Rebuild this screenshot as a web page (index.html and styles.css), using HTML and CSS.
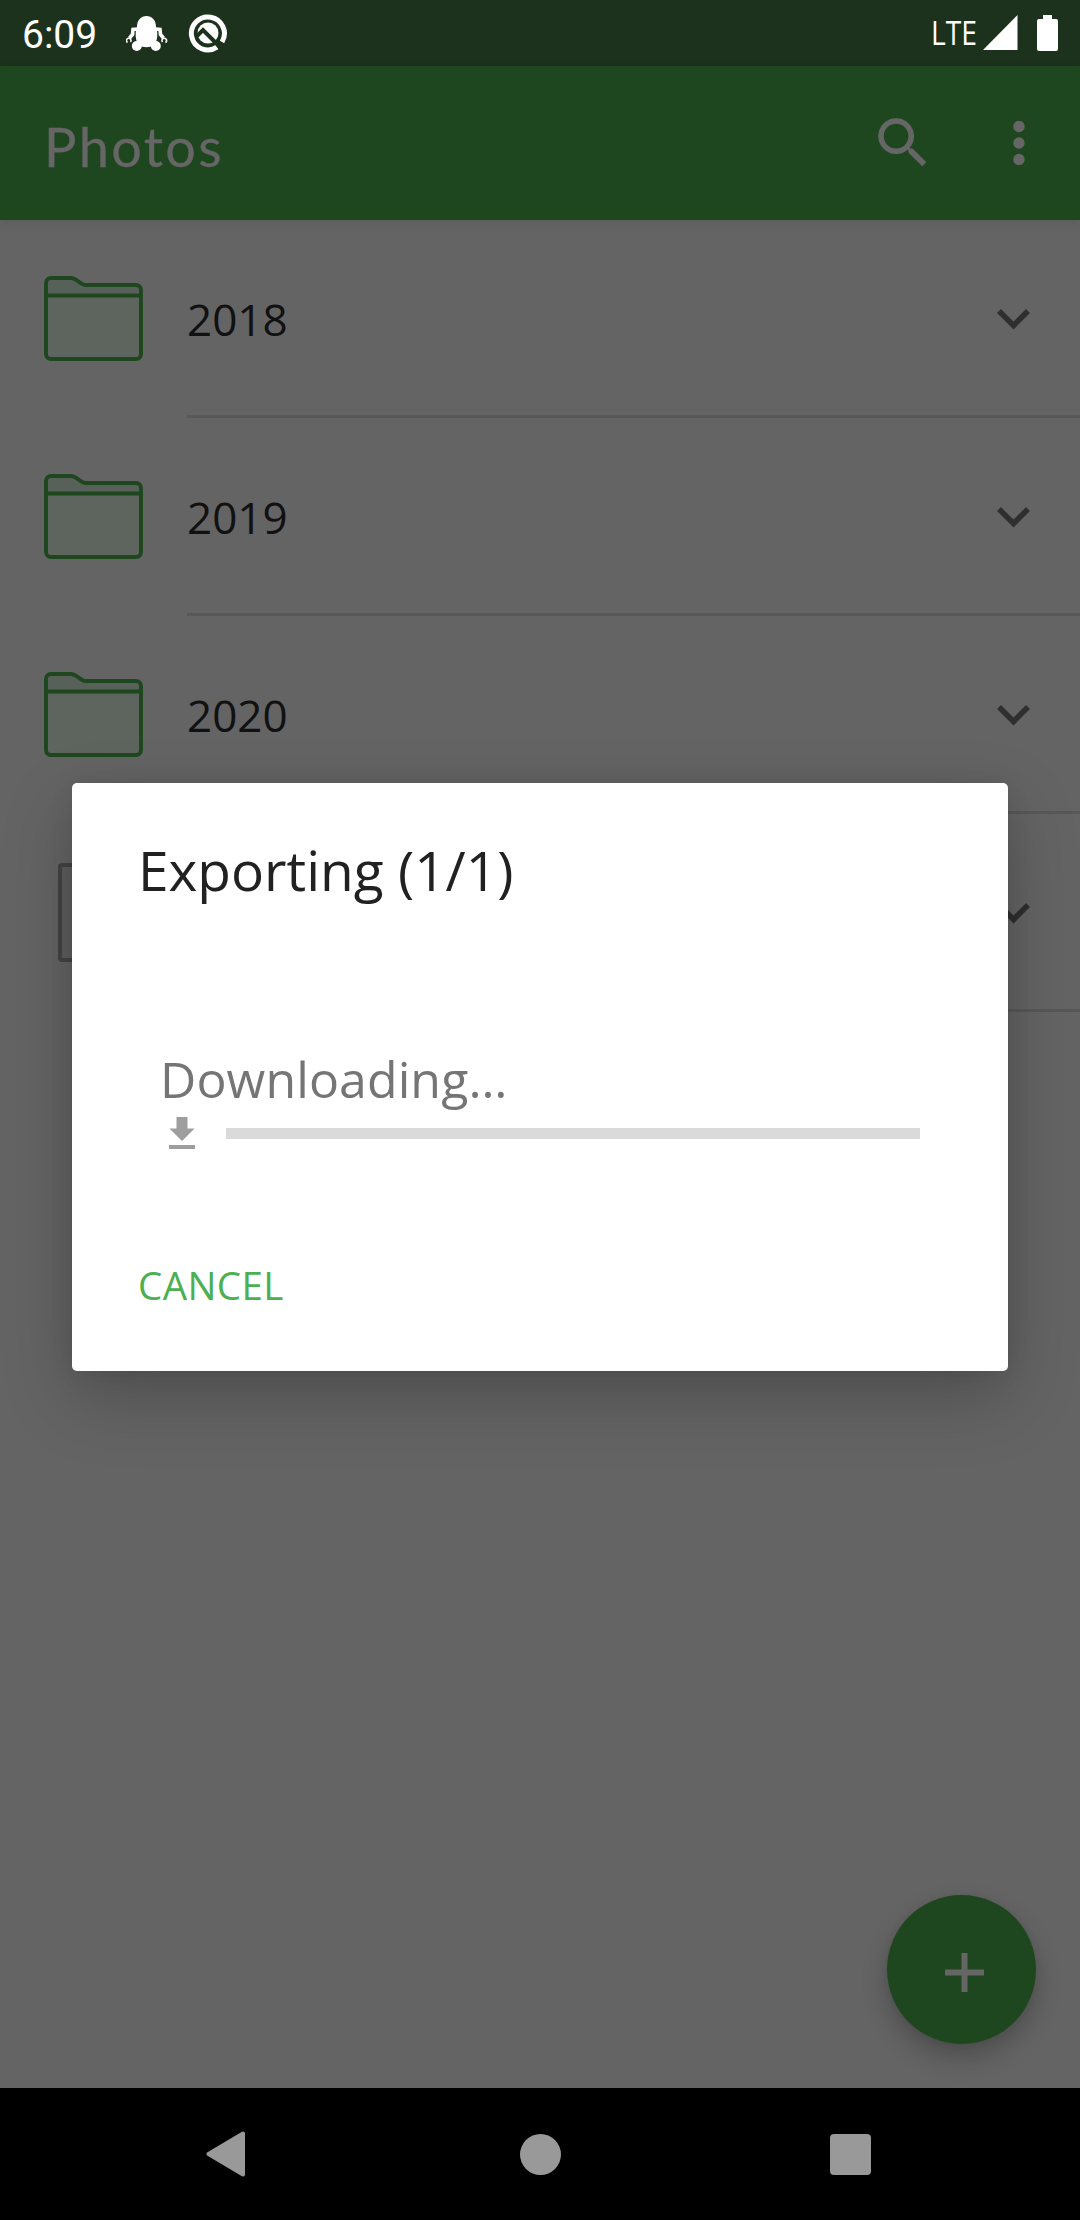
FILE: index.html
```html
<!DOCTYPE html>
<html lang="en">
<head>
<meta charset="utf-8">
<title>Photos</title>
<link rel="stylesheet" href="styles.css">
</head>
<body>
<div class="screen">
  <header class="status">
    <span class="clock">6:09</span>
    <svg class="debug" width="42" height="36" viewBox="0 0 42 36" fill="#fff">
      <path d="M11 11C11 4 15 0 20.500 0S30 4 30 11c2 5 2 14-2 18-4 3-11 3-15 0-4-4-4-13-2-18z"/>
      <circle cx="10.800" cy="30" r="5"/><circle cx="29.800" cy="30" r="5"/>
      <path d="M12 13l-5 .5-.5 5L3.500 22M29 13l5 .5.5 5 3 3.500" fill="none" stroke="#fff" stroke-width="3.600"/>
      <path d="M1.500 26.500a2.300 2.300 0 1 1 3-.5M39.500 26.500a2.300 2.300 0 1 0-3-.5" fill="none" stroke="#fff" stroke-width="1.600"/>
    </svg>
    <svg class="qlogo" width="40" height="40" viewBox="0 0 40 40" fill="none">
      <path d="M29 34.200A16.500 16.500 0 1 1 34 29" stroke="#fff" stroke-width="5"/>
      <circle cx="20" cy="20" r="10.500" fill="#fff"/>
      <path d="M9 23l6-6 16 16" stroke="#1c321d" stroke-width="4"/>
    </svg>
    <svg class="lte" width="45" height="30" viewBox="0 0 45 30"><text x="-1" y="26.500" textLength="46" lengthAdjust="spacingAndGlyphs">LTE</text></svg>
    <svg class="signal" width="35" height="35" viewBox="0 0 35 35"><path d="M0 35L34.500 0v35z" fill="#fff"/></svg>
    <svg class="battery" width="21" height="36" viewBox="0 0 21 36"><path d="M6 0h9v4h4a2 2 0 0 1 2 2v28a2 2 0 0 1-2 2H2a2 2 0 0 1-2-2V6a2 2 0 0 1 2-2h4z" fill="#fff"/></svg>
  </header>
  <div class="appbar">
    <h1 class="title">Photos</h1>
    <svg class="search" width="66" height="66" viewBox="0 0 24 24"><path fill="#666" d="M15.500 14h-.79l-.28-.27A6.470 6.470 0 0 0 16 9.500 6.500 6.500 0 1 0 9.500 16c1.610 0 3.090-.59 4.230-1.570l.27.28v.79l5 4.990L20.490 19l-4.990-5zm-6 0C7.010 14 5 11.990 5 9.500S7.010 5 9.500 5 14 7.010 14 9.500 11.990 14 9.500 14z"/></svg>
    <svg class="more" width="12" height="44" viewBox="0 0 12 44" fill="#666"><circle cx="6" cy="5.500" r="5.700"/><circle cx="6" cy="22" r="5.700"/><circle cx="6" cy="38.500" r="5.700"/></svg>
  </div>
  <main class="list">
    <div class="row">
      <svg class="folder" width="99" height="85" viewBox="0 0 99 85"><use href="#folder"/></svg>
      <div class="cell"><span>2018</span><svg class="chev" width="33" height="21" viewBox="0 0 33 21"><use href="#chev"/></svg></div>
    </div>
    <div class="row">
      <svg class="folder" width="99" height="85" viewBox="0 0 99 85"><use href="#folder"/></svg>
      <div class="cell"><span>2019</span><svg class="chev" width="33" height="21" viewBox="0 0 33 21"><use href="#chev"/></svg></div>
    </div>
    <div class="row">
      <svg class="folder" width="99" height="85" viewBox="0 0 99 85"><use href="#folder"/></svg>
      <div class="cell"><span>2020</span><svg class="chev" width="33" height="21" viewBox="0 0 33 21"><use href="#chev"/></svg></div>
    </div>
    <div class="row">
      <svg class="folder" width="99" height="99" viewBox="0 0 99 99"><rect x="16" y="2" width="68" height="95" rx="2" fill="#5e5e5e" stroke="#444" stroke-width="4"/></svg>
      <div class="cell"><svg class="chev" width="33" height="21" viewBox="0 0 33 21"><use href="#chev"/></svg></div>
    </div>
  </main>
  <nav class="nav">
    <svg width="40" height="46" viewBox="0 0 40 46"><path d="M2.500 23L37 2.500v41z" fill="#999" stroke="#999" stroke-width="4" stroke-linejoin="round"/></svg>
    <span class="home"></span>
    <span class="recent"></span>
  </nav>
  <div class="fab"><svg width="39" height="39" viewBox="0 0 39 39"><path d="M19.500 0v39M0 19.500h39" stroke="#666" stroke-width="6"/></svg></div>
  <div class="overlay">
    <section class="dialog">
      <h2>Exporting (1/1)</h2>
      <p class="state">Downloading…</p>
      <div class="progress">
        <svg width="26" height="32" viewBox="0 0 26 32" fill="#9e9e9e"><path d="M7.500 0h11v11.500H25.500L13 24 .5 11.500h7zM0 28h26v4H0z"/></svg>
        <div class="bar"></div>
      </div>
      <button class="cancel">CANCEL</button>
    </section>
  </div>
</div>
<svg class="defs" width="0" height="0">
  <defs>
    <g id="folder">
      <path d="M2 19.500V7a5 5 0 0 1 5-5h20c6 0 9 7 15 7h50a5 5 0 0 1 5 5v6z" fill="#58605a"/>
      <path d="M2 19.500h95V78a5 5 0 0 1-5 5H7a5 5 0 0 1-5-5z" fill="#5e655f"/>
      <path d="M2 19.500h95M2 7a5 5 0 0 1 5-5h20c6 0 9 7 15 7h50a5 5 0 0 1 5 5v64a5 5 0 0 1-5 5H7a5 5 0 0 1-5-5z" fill="none" stroke="#1f471f" stroke-width="3.900"/>
    </g>
    <path id="chev" d="M2 2l14.500 14.500L31 2" fill="none" stroke="#2f2f2f" stroke-width="5.500"/>
  </defs>
</svg>
</body>
</html>
```
FILE: styles.css
```css
* { box-sizing: border-box; }
body { margin: 0; font-family: "Open Sans", sans-serif; }
svg { display: block; flex: none; }
.defs { position: absolute; }
.screen {
  position: relative;
  width: 1080px;
  height: 2220px;
  display: flex;
  flex-direction: column;
  background: #646464;
  overflow: hidden;
}
.status {
  height: 66px;
  display: flex;
  align-items: flex-start;
  padding: 0 22px;
  background: #1c321d;
}
.clock {
  width: 104px;
  padding-top: 12px;
  font: 39px/46px Roboto, sans-serif;
  color: #fff;
}
.debug { margin-top: 16px; }
.qlogo { margin: 13px auto 0 20px; }
.lte { margin-top: 18px; overflow: visible; }
.lte text { font: 33.5px "Open Sans", sans-serif; fill: #fff; }
.signal { margin: 15px 19px 0 6px; }
.battery { margin-top: 15px; }
.appbar {
  height: 154px;
  display: flex;
  align-items: center;
  padding: 0 55px 0 44px;
  background: #1f471f;
  box-shadow: 0 2px 9px rgba(0, 0, 0, 0.1);
}
.title {
  margin: 8px auto 0 0;
  font: 400 54px/66px Lato, sans-serif;
  letter-spacing: 2.4px;
  -webkit-text-stroke: 0.3px #666;
  color: #666;
}
.search { margin-right: 77px; }
.list { flex: 1; }
.row {
  height: 198px;
  display: flex;
  align-items: center;
  padding-left: 44px;
}
.folder { margin: -2px 44px 0 0; }
.cell {
  flex: 1;
  height: 198px;
  display: flex;
  align-items: center;
  padding: 3px 50px 0 0;
  border-bottom: 3px solid #585858;
  font-size: 44px;
  line-height: 60px;
  color: #111;
}
.chev { margin: 1px 0 0 auto; }
.nav {
  height: 132px;
  display: flex;
  align-items: center;
  justify-content: space-between;
  padding: 0 209px 0 206px;
  background: #000;
}
.home { width: 41px; height: 41px; margin-left: 4px; border-radius: 50%; background: #999; }
.recent { width: 41px; height: 41px; border-radius: 4px; background: #999; }
.fab {
  position: absolute;
  left: 887px;
  top: 1895px;
  width: 149px;
  height: 149px;
  padding: 5px 0 0 5px;
  display: flex;
  align-items: center;
  justify-content: center;
  border-radius: 50%;
  background: #1f471f;
  box-shadow: 0 13px 26px rgba(0, 0, 0, 0.23), 0 0 8px rgba(0, 0, 0, 0.06);
}
.overlay {
  position: absolute;
  inset: 66px 0 132px;
  display: flex;
  align-items: center;
  justify-content: center;
}
.dialog {
  width: 936px;
  height: 588px;
  padding: 49px 88px 0 66px;
  display: flex;
  flex-direction: column;
  align-items: flex-start;
  border-radius: 5px;
  background: #fff;
  box-shadow: 0 26px 70px rgba(0, 0, 0, 0.22), 0 0 24px rgba(0, 0, 0, 0.08);
}
.dialog h2 {
  margin: 0;
  font-size: 55px;
  line-height: 76px;
  font-weight: 400;
  color: #212121;
}
.state {
  margin: 136px 0 0 22px;
  font-size: 50px;
  line-height: 70px;
  letter-spacing: 0.1px;
  color: #757575;
}
.progress {
  align-self: stretch;
  display: flex;
  align-items: center;
  gap: 31px;
  margin: 3px 0 0 31px;
}
.bar { flex: 1; height: 11px; background: #dadada; }
.cancel {
  margin: 109px 0 0;
  padding: 0;
  border: 0;
  background: none;
  font: 38.5px/54px "Open Sans", sans-serif;
  letter-spacing: 0.4px;
  color: #4caf50;
}
```
